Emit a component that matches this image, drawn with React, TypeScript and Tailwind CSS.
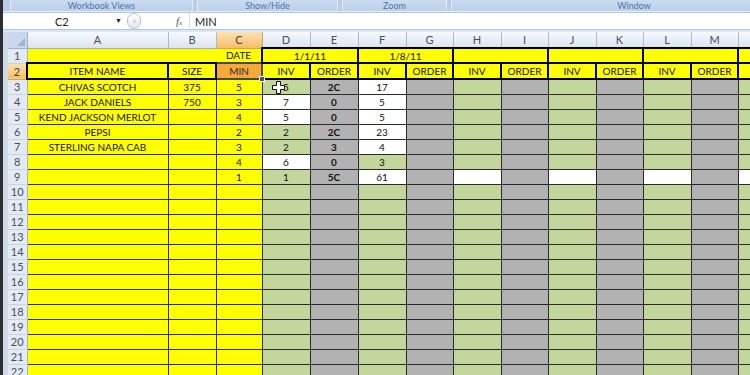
import React from "react";

type Fill = "y" | "g" | "s" | "w";

const fillCls: Record<Fill, string> = {
  y: "bg-[#ffff00]",
  g: "bg-[#c3d69b]",
  s: "bg-[#b2b2b2]",
  w: "bg-white",
};

type Row = {
  n: number;
  a: string;
  b: string;
  c: string;
  d: [Fill, string];
  e: string;
  f: [Fill, string];
};

const topRows: Row[] = [
  { n: 3, a: "CHIVAS SCOTCH", b: "375", c: "5", d: ["g", "5"], e: "2C", f: ["w", "17"] },
  { n: 4, a: "JACK DANIELS", b: "750", c: "3", d: ["w", "7"], e: "0", f: ["w", "5"] },
  { n: 5, a: "KEND JACKSON MERLOT", b: "", c: "4", d: ["w", "5"], e: "0", f: ["w", "5"] },
  { n: 6, a: "PEPSI", b: "", c: "2", d: ["g", "2"], e: "2C", f: ["w", "23"] },
  { n: 7, a: "STERLING NAPA CAB", b: "", c: "3", d: ["g", "2"], e: "3", f: ["w", "4"] },
  { n: 8, a: "", b: "", c: "4", d: ["w", "6"], e: "0", f: ["g", "3"] },
  { n: 9, a: "", b: "", c: "1", d: ["g", "1"], e: "5C", f: ["w", "61"] },
];

const emptyRows: Row[] = Array.from({ length: 13 }, (_, i) => ({
  n: 10 + i,
  a: "",
  b: "",
  c: "",
  d: ["g", ""] as [Fill, string],
  e: "",
  f: ["g", ""] as [Fill, string],
}));

const rows = [...topRows, ...emptyRows];

const colLetters = ["A", "B", "C", "D", "E", "F", "G", "H", "I", "J", "K", "L", "M", "N"];

const rowHead =
  "p-0 text-center text-[11px] text-[#44505e] bg-[#e3eaf4] border-r border-r-[#9db1cb] border-b border-b-[#c8d4e4]";
const cell = "p-0 text-center text-[10px] text-[#111] border border-[#2a2a2a]";
const colHead =
  "p-0 text-center text-[11px] font-normal text-[#46505c] bg-linear-to-b from-[#f6f9fd] to-[#dbe4f0] border-r border-r-[#a9bcd4] border-b border-b-[#9db1cb]";
const head2 = "p-0 bg-[#ffff00] border-2 border-black text-center text-[10px] text-[#111]";

function PlusCursor() {
  return (
    <svg
      className="absolute left-[9px] top-[1px]"
      width="13"
      height="13"
      viewBox="0 0 13 13"
    >
      <path
        d="M4.5 0.5h4v4h4v4h-4v4h-4v-4h-4v-4h4z"
        fill="#ffffff"
        stroke="#111111"
        strokeWidth="1"
      />
    </svg>
  );
}

function Ribbon() {
  const groups = [
    { label: "Workbook Views", w: "w-[183px]" },
    { label: "Show/Hide", w: "w-[141px]" },
    { label: "Zoom", w: "w-[105px]" },
    { label: "Window", w: "w-[366px]" },
  ];
  return (
    <div className="h-[11px] shrink-0 flex gap-[4px] pl-[7px] bg-[#b9cde6] overflow-hidden">
      {groups.map((g) => (
        <div
          key={g.label}
          className={`${g.w} h-[11px] shrink-0 rounded-b-[3px] bg-linear-to-b from-[#c9dbf0] to-[#bcd0ea] border-x border-[#e2ecf8] flex items-center justify-center`}
        >
          <span className="text-[9px] leading-[11px] text-[#4d74aa]">{g.label}</span>
        </div>
      ))}
    </div>
  );
}

function FormulaBar() {
  return (
    <div className="h-[18px] shrink-0 flex items-center bg-white border-y border-[#b4c6dc] leading-none">
      <div className="ml-[5px] w-[117px] h-full flex items-center relative">
        <span className="pl-[47px] text-[11px] text-[#222]">C2</span>
        <span className="absolute right-[3px] top-[4px] text-[7px] text-[#222]">▼</span>
      </div>
      <div className="ml-[2px] w-[14px] h-[16px] rounded-full border border-[#b7c3d0] bg-linear-to-b from-white to-[#e2e8ef] flex items-center justify-center">
        <span className="w-[3px] h-[3px] rounded-full bg-[#c8d2dd]" />
      </div>
      <div className="ml-[35px] w-[12px] text-[11px] italic text-[#555] font-['Liberation_Serif',serif]">
        f<span className="text-[7px]">x</span>
      </div>
      <div className="ml-[1px] w-px h-full bg-[#d5dde7]" />
      <span className="ml-[5px] text-[11px] text-[#222]">MIN</span>
    </div>
  );
}

function Sheet() {
  const data = ["D", "E", "F", "G", "H", "I", "J", "K", "L", "M", "N"];
  return (
    <table className="border-collapse table-fixed w-[778px] leading-none">
      <colgroup>
        <col className="w-[19px]" />
        <col className="w-[141px]" />
        <col className="w-[48px]" />
        <col className="w-[46px]" />
        <col className="w-[48px]" />
        <col className="w-[48px]" />
        <col className="w-[48px]" />
        <col className="w-[47px]" />
        <col className="w-[48px]" />
        <col className="w-[47px]" />
        <col className="w-[48px]" />
        <col className="w-[47px]" />
        <col className="w-[48px]" />
        <col className="w-[47px]" />
        <col className="w-[48px]" />
      </colgroup>
      <tbody>
        <tr className="h-[16px]">
          <td className="p-0 bg-[#c9d7ea] border-r border-b border-[#9db1cb] relative">
            <svg className="absolute right-[2px] bottom-[2px]" width="8" height="8" viewBox="0 0 8 8">
              <path d="M8 0V8H0z" fill="#9fb4cf" />
            </svg>
          </td>
          {colLetters.map((l) =>
            l === "C" ? (
              <td
                key={l}
                className="p-0 text-center text-[11px] text-[#4a4030] bg-linear-to-b from-[#fde2b2] to-[#f6bd68] border-r border-r-[#c9a36a] border-b border-b-[#d9a458]"
              >
                {l}
              </td>
            ) : (
              <td key={l} className={colHead}>
                {l}
              </td>
            )
          )}
        </tr>
        <tr className="h-[15px]">
          <td className={rowHead}>1</td>
          <td className="p-0 bg-[#ffff00] border-0" />
          <td className="p-0 bg-[#ffff00] border-0" />
          <td className="p-0 bg-[#ffff00] border-0 text-center text-[10px] text-[#111]">DATE</td>
          <td colSpan={2} className={head2}>
            1/1/11
          </td>
          <td colSpan={2} className={head2}>
            1/8/11
          </td>
          <td colSpan={2} className={head2} />
          <td colSpan={2} className={head2} />
          <td colSpan={2} className={head2} />
          <td className={head2} />
        </tr>
        <tr className="h-[16px]">
          <td className="p-0 text-center text-[11px] text-[#4a4030] bg-linear-to-b from-[#fde2b2] to-[#f6bd68] border-r border-r-[#c9a36a] border-b border-b-[#d9a458]">
            2
          </td>
          <td className={head2}>ITEM NAME</td>
          <td className={head2}>SIZE</td>
          <td className="p-0 bg-[#f4a93a] border-2 border-[#4a4a3a] text-center text-[10px] text-[#2a2a2a] relative">
            MIN
            <span className="absolute -right-[4px] -bottom-[4px] w-[6px] h-[6px] bg-[#555] border border-white z-10" />
          </td>
          {data.map((l, i) => (
            <td key={l} className={head2}>
              {i % 2 === 0 ? "INV" : "ORDER"}
            </td>
          ))}
        </tr>
        {rows.map((r) => (
          <tr key={r.n} className="h-[15px]">
            <td className={rowHead}>{r.n}</td>
            <td className={`${cell} ${fillCls.y}`}>{r.a}</td>
            <td className={`${cell} ${fillCls.y}`}>{r.b}</td>
            <td className={`${cell} ${fillCls.y}`}>{r.c}</td>
            <td className={`${cell} ${fillCls[r.d[0]]} ${r.n === 3 ? "relative" : ""}`}>
              {r.d[1]}
              {r.n === 3 && <PlusCursor />}
            </td>
            <td className={`${cell} ${fillCls.s} font-bold`}>{r.e}</td>
            <td className={`${cell} ${fillCls[r.f[0]]}`}>{r.f[1]}</td>
            {data.slice(3).map((l, i) => {
              const isInv = i % 2 === 1;
              const f: Fill = isInv ? (r.n === 9 ? "w" : "g") : "s";
              return <td key={l} className={`${cell} ${fillCls[f]}`} />;
            })}
          </tr>
        ))}
      </tbody>
    </table>
  );
}

export default function App() {
  return (
    <div className="w-[750px] h-[375px] overflow-hidden flex bg-[#c5d5e8] font-['Lato',sans-serif]">
      <div className="w-[3px] shrink-0 bg-[#2b2e34]" />
      <div className="flex-1 min-w-0 flex flex-col">
        <Ribbon />
        <div className="h-px shrink-0 bg-[#e4edf8]" />
        <FormulaBar />
        <div className="h-[2px] shrink-0 bg-[#dce6f2]" />
        <div className="flex shrink-0">
          <div className="w-[5px] shrink-0 bg-[#cfd9e6]" />
          <Sheet />
        </div>
      </div>
    </div>
  );
}
